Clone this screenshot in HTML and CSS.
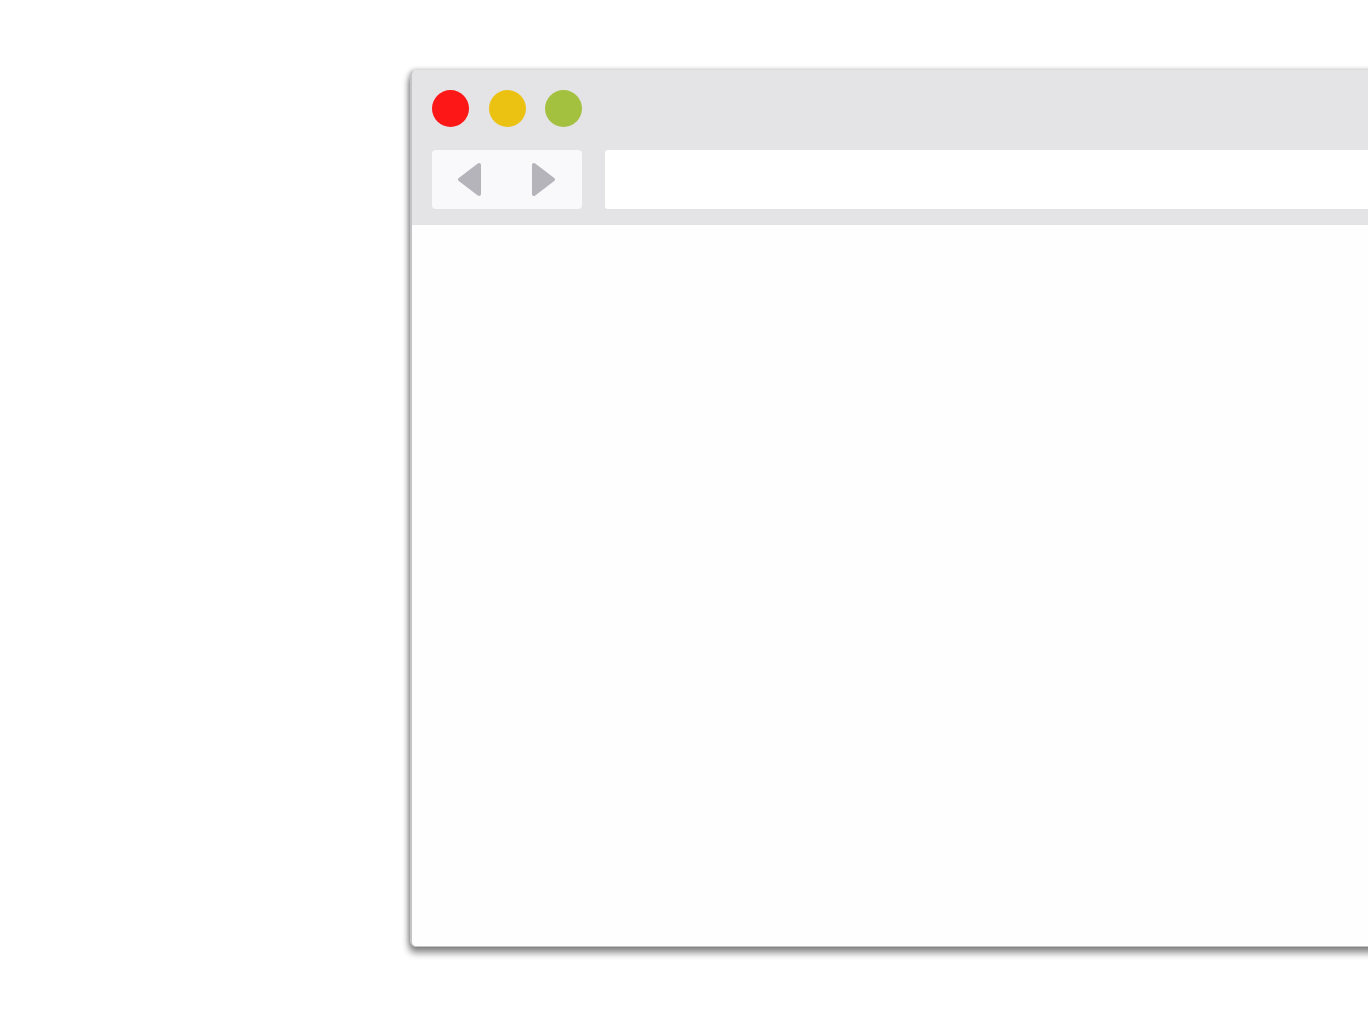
FILE: index.html
```html
<!DOCTYPE html>
<html>
<head>
<meta charset="utf-8">
<link rel="stylesheet" href="styles.css">
</head>
<body>
<div class="window">
  <div class="titlebar">
    <div class="lights">
      <span class="light red"></span>
      <span class="light yellow"></span>
      <span class="light green"></span>
    </div>
    <div class="toolbar">
      <div class="nav">
        <svg width="150" height="59" viewBox="0 0 150 59">
          <path d="M28 29.5 L47 15 L47 44 Z" fill="#b5b4ba" stroke="#b5b4ba" stroke-width="4" stroke-linejoin="round"/>
          <path d="M102 15 L121 29.5 L102 44 Z" fill="#b5b4ba" stroke="#b5b4ba" stroke-width="4" stroke-linejoin="round"/>
        </svg>
      </div>
      <div class="address"></div>
    </div>
  </div>
  <div class="content"></div>
</div>
</body>
</html>
```
FILE: styles.css
```css
html, body {
  margin: 0;
  padding: 0;
  background: #ffffff;
  overflow: hidden;
  width: 1368px;
  height: 1024px;
}
body {
  padding-top: 70px;
  padding-left: 410px;
  box-sizing: border-box;
}
.window {
  width: 1020px;
  height: 877px;
  border-radius: 6px;
  background: #fefefe;
  border-left: 2px solid #c4c4c6;
  border-bottom: 1px solid #c4c4c6;
  box-sizing: border-box;
  box-shadow: -1px 6px 7px rgba(0, 0, 0, 0.45), -2px 0 5px rgba(0, 0, 0, 0.12), 0 -1px 4px rgba(0, 0, 0, 0.14);
  display: flex;
  flex-direction: column;
  overflow: hidden;
}
.titlebar {
  background: #e4e3e6;
  height: 155px;
  box-sizing: border-box;
  padding: 20px 0 16px 20px;
  display: flex;
  flex-direction: column;
  gap: 23px;
}
.lights {
  display: flex;
  gap: 19.5px;
  height: 37px;
}
.light {
  width: 37px;
  height: 37px;
  border-radius: 50%;
  display: block;
}
.red { background: #fd1716; }
.yellow { background: #ebc212; }
.green { background: #a3c13f; }
.toolbar {
  display: flex;
  gap: 23px;
  height: 59px;
}
.nav {
  width: 150px;
  height: 59px;
  background: #f9f8fa;
  border-radius: 4px;
  flex: none;
}
.nav svg { display: block; }
.address {
  flex: 1;
  background: #ffffff;
  border-radius: 3px 0 0 3px;
}
.content {
  flex: 1;
  background: #fefefe;
}
```
